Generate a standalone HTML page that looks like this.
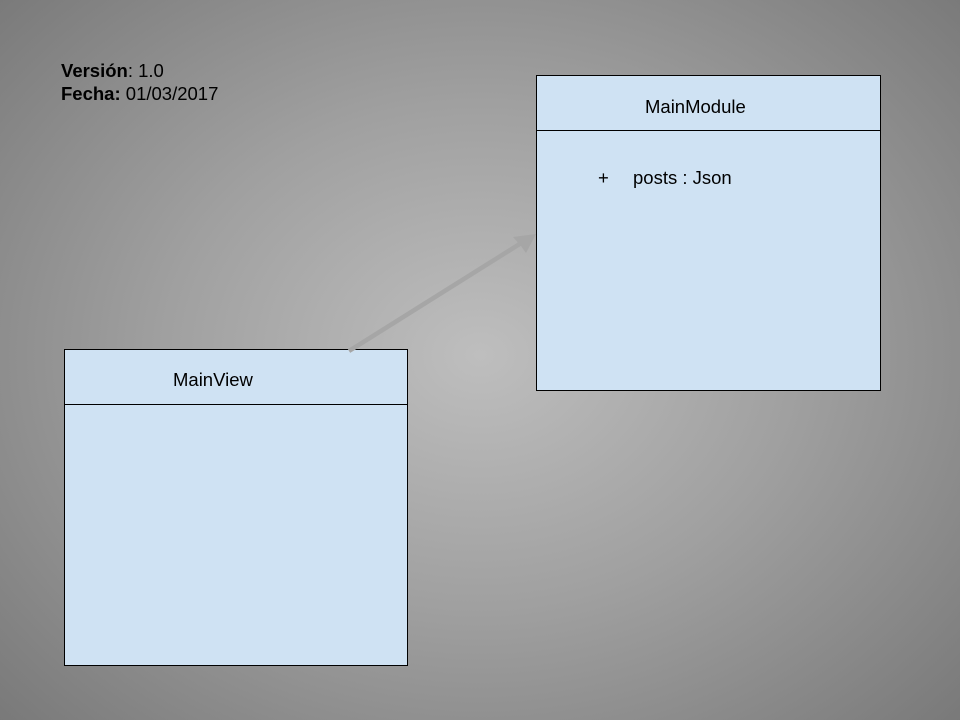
<!DOCTYPE html>
<html><head><meta charset="utf-8"><style>
html,body{margin:0;padding:0;}
body{width:960px;height:720px;position:relative;overflow:hidden;
background:radial-gradient(ellipse 700px 560px at 480px 355px,#bebebe 0%,#a0a0a0 45%,#757575 100%);
font-family:"Liberation Sans",sans-serif;color:#000;}
.box{position:absolute;background:#cfe2f3;border:1px solid #000;box-sizing:border-box;}
.hdr{position:absolute;left:0;right:0;top:0;border-bottom:1px solid #000;box-sizing:border-box;}
.t{position:absolute;font-size:18.5px;white-space:nowrap;}
</style></head><body>
<div class="t" style="left:61px;top:59px;font-size:18.5px;line-height:23px;"><b>Versión</b>: 1.0<br><b>Fecha:</b> 01/03/2017</div>
<div class="box" style="left:536px;top:75px;width:345px;height:316px;">
  <div class="hdr" style="height:55px;"></div>
  <div class="t" style="left:108px;top:20px;">MainModule</div>
  <div class="t" style="left:61px;top:91px;">+</div>
  <div class="t" style="left:96px;top:91px;">posts : Json</div>
</div>
<div class="box" style="left:64px;top:349px;width:344px;height:317px;">
  <div class="hdr" style="height:55px;"></div>
  <div class="t" style="left:108px;top:19px;">MainView</div>
</div>
<svg width="960" height="720" style="position:absolute;left:0;top:0">
  <line x1="349" y1="351" x2="526" y2="240" stroke="#a6a6a6" stroke-width="4.5"/>
  <polygon points="536,234 513,237 521,246 526,253" fill="#a6a6a6"/>
</svg>
</body></html>
